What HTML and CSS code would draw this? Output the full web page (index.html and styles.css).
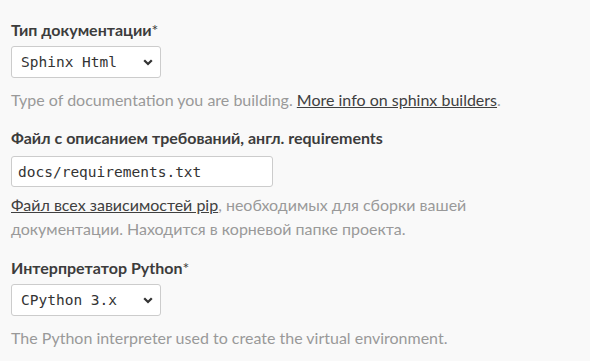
FILE: index.html
```html
<!DOCTYPE html>
<html lang="ru">
<head>
<meta charset="utf-8">
<link rel="stylesheet" href="styles.css">
</head>
<body>
<form class="form">
  <div class="label label-first">Тип документации<span class="req">*</span></div>
  <div class="select">
    <span>Sphinx Html</span>
    <svg class="chev" width="10" height="7" viewBox="0 0 10 7"><path d="M1.2 1.3 L5 5 L8.8 1.3" fill="none" stroke="#333" stroke-width="2.3"/></svg>
  </div>
  <p class="help">Type of documentation you are building. <a href="#">More info on sphinx builders</a>.</p>

  <div class="label label-second">Файл с описанием требований, англ. requirements</div>
  <div class="input">docs/requirements.txt</div>
  <p class="help help-after-input"><a href="#">Файл всех зависимостей pip</a>, необходимых для сборки вашей документации. Находится в корневой папке проекта.</p>

  <div class="label label-third">Интерпретатор Python<span class="req">*</span></div>
  <div class="select">
    <span>CPython 3.x</span>
    <svg class="chev" width="10" height="7" viewBox="0 0 10 7"><path d="M1.2 1.3 L5 5 L8.8 1.3" fill="none" stroke="#333" stroke-width="2.3"/></svg>
  </div>
  <p class="help">The Python interpreter used to create the virtual environment.</p>
</form>
</body>
</html>
```

FILE: styles.css
```css
html, body {
  margin: 0;
  padding: 0;
  background: #f9f9f9;
}
body {
  font-family: Lato, "Noto Sans", sans-serif;
  color: #404040;
}
.form {
  padding: 0 11px;
  width: 500px;
}
.label {
  font-weight: 700;
  font-size: 16px;
  line-height: 24px;
  color: #3c3c3c;
}
.label-first { margin-top: 18px; margin-bottom: 4px; }
.label-second { margin-top: 14px; margin-bottom: 6px; }
.label-third { margin-top: 15px; margin-bottom: 4px; }
.req { font-weight: 400; }
.select {
  box-sizing: border-box;
  width: 150px;
  height: 32px;
  background: #fff;
  border: 1px solid #ccc;
  border-radius: 3px;
  display: flex;
  align-items: center;
  justify-content: space-between;
  padding: 0 7px 0 9px;
  font-family: "DejaVu Sans Mono", "Liberation Mono", monospace;
  font-size: 14.5px;
  color: #333;
}
.chev { display: block; margin-top: 1px; }
.input {
  box-sizing: border-box;
  width: 262px;
  height: 31px;
  background: #fff;
  border: 1px solid #ccc;
  border-radius: 3px;
  display: flex;
  align-items: center;
  padding: 0 6px;
  font-family: "DejaVu Sans Mono", "Liberation Mono", monospace;
  font-size: 14.5px;
  color: #333;
}
.help {
  margin: 10px 0 0;
  font-size: 16px;
  line-height: 24px;
  color: #999;
}
.help-after-input { margin-top: 6px; }
.help a {
  color: #404040;
  text-decoration: underline;
}
```
